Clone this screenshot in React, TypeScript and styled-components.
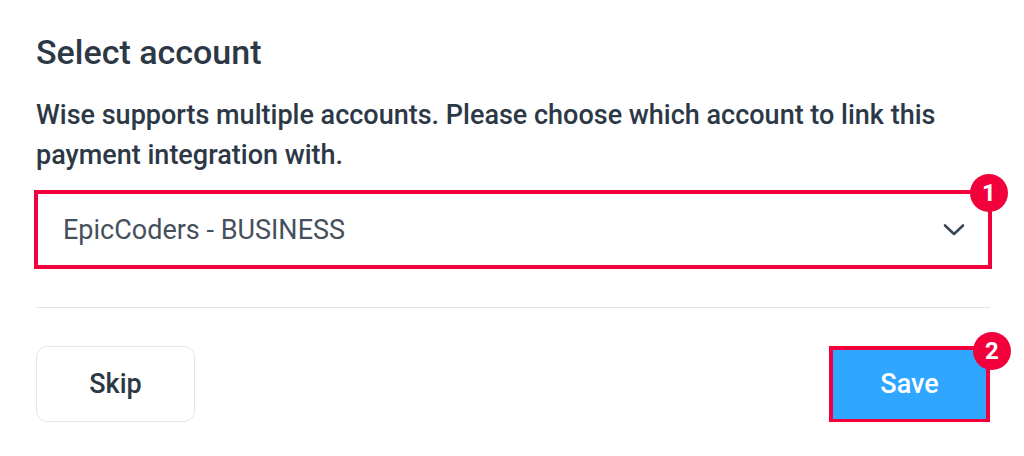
import React from 'react';
import styled, {createGlobalStyle} from 'styled-components';

const RED = '#f2003c';
const TEXT = '#2d3846';

const GlobalStyle = createGlobalStyle`
  html, body {
    margin: 0;
    padding: 0;
    background: #ffffff;
  }
  body {
    font-family: Roboto, "Liberation Sans", sans-serif;
    color: ${TEXT};
  }
`;

const Panel = styled.div`
  width: 954px;
  padding: 30px 0 0 36px;
  display: flex;
  flex-direction: column;
`;

const Title = styled.h2`
  margin: 0;
  font-size: 34px;
  font-weight: 500;
  line-height: 44px;
`;

const Description = styled.p`
  margin: 21px 0 0;
  font-size: 27px;
  font-weight: 500;
  line-height: 40px;
`;

const Highlight = styled.div`
  position: relative;
  outline: 4px solid ${RED};
  outline-offset: -2px;
`;

const Badge = styled.span<{$top: number; $right: number}>`
  position: absolute;
  top: ${(p) => p.$top}px;
  right: ${(p) => p.$right}px;
  width: 38px;
  height: 38px;
  border-radius: 50%;
  background: ${RED};
  color: #ffffff;
  font-size: 24px;
  font-weight: 700;
  display: flex;
  align-items: center;
  justify-content: center;
  z-index: 2;
`;

const SelectBox = styled(Highlight)`
  margin-top: 17px;
  height: 75px;
  display: flex;
  align-items: center;
  justify-content: space-between;
  padding: 0 25px 0 27px;
  box-sizing: border-box;
  font-size: 27px;
  color: #46505c;
`;

const Chevron = () => (
  <svg width="22" height="14" viewBox="0 0 22 14" fill="none">
    <path
      d="M2 2.5L11 11L20 2.5"
      stroke="#3a4756"
      strokeWidth="2.6"
      strokeLinecap="round"
      strokeLinejoin="round"
    />
  </svg>
);

const Divider = styled.hr`
  margin: 40px 0 0;
  border: 0;
  border-top: 1.5px solid #e4e4e4;
`;

const Actions = styled.div`
  margin-top: 38px;
  display: flex;
  justify-content: space-between;
  align-items: center;
`;

const SkipButton = styled.button`
  width: 159px;
  height: 76px;
  border: 1.5px solid #e1e6ee;
  border-radius: 11px;
  background: #ffffff;
  font-family: inherit;
  font-size: 27px;
  font-weight: 500;
  color: ${TEXT};
`;

const SaveWrap = styled(Highlight)`
  width: 157px;
  height: 73px;
  margin-right: 2px;
`;

const SaveButton = styled.button`
  width: 100%;
  height: 100%;
  border: 0;
  background: #2fa6ff;
  font-family: inherit;
  font-size: 27px;
  font-weight: 500;
  color: #ffffff;
`;

export default function App() {
  return (
    <>
      <GlobalStyle />
      <Panel>
        <Title>Select account</Title>
        <Description>
          Wise supports multiple accounts. Please choose which account to link
          this payment integration with.
        </Description>
        <SelectBox>
          <span>EpicCoders - BUSINESS</span>
          <Chevron />
          <Badge $top={-18} $right={-18}>1</Badge>
        </SelectBox>
        <Divider />
        <Actions>
          <SkipButton>Skip</SkipButton>
          <SaveWrap>
            <SaveButton>Save</SaveButton>
            <Badge $top={-16} $right={-23}>2</Badge>
          </SaveWrap>
        </Actions>
      </Panel>
    </>
  );
}
